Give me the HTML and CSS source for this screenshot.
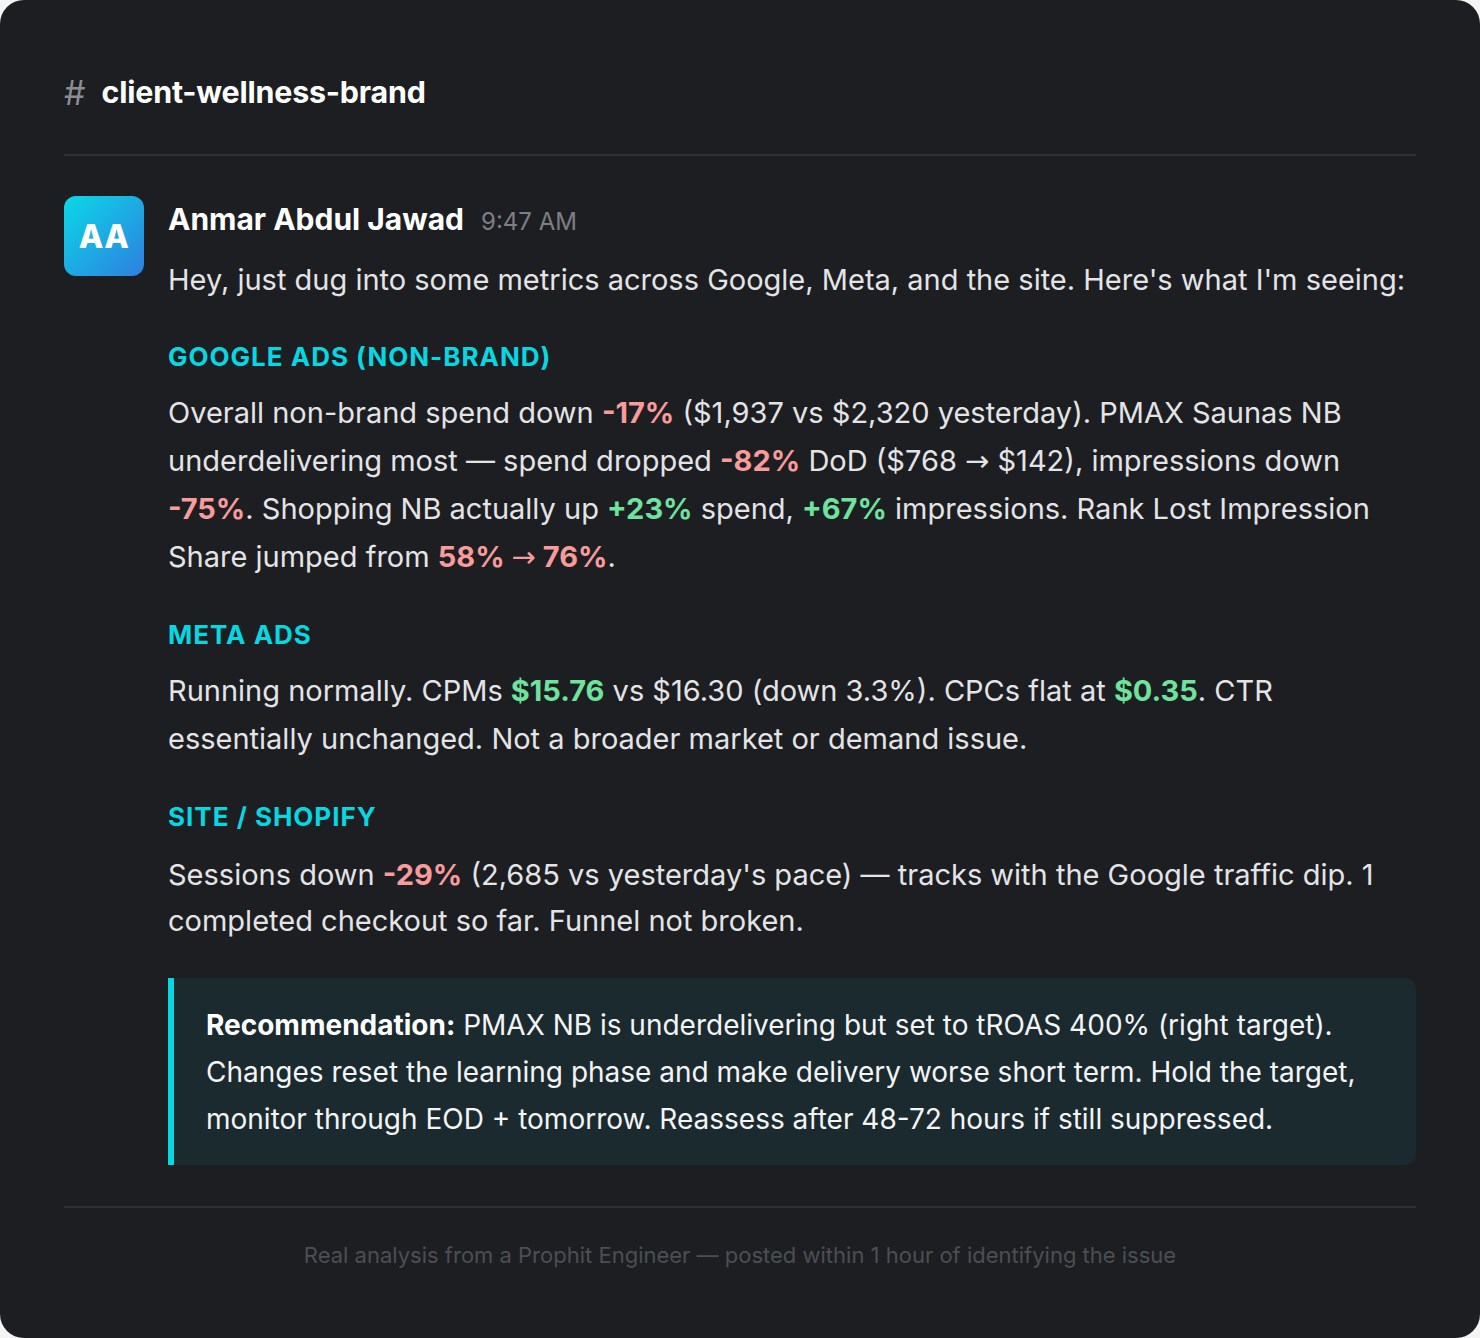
FILE: index.html
```html
<!DOCTYPE html>
<html lang="en">
<head>
<meta charset="utf-8">
<title>client-wellness-brand</title>
<link rel="stylesheet" href="styles.css">
</head>
<body>
<div class="card">
  <header class="channel">
    <span class="hash">#</span>
    <span class="channel-name">client-wellness-brand</span>
  </header>
  <div class="divider"></div>
  <div class="message">
    <div class="avatar">AA</div>
    <div class="content">
      <div class="meta-line">
        <span class="author">Anmar Abdul Jawad</span>
        <span class="time">9:47 AM</span>
      </div>
      <p class="intro">Hey, just dug into some metrics across Google, Meta, and the site. Here's what I'm seeing:</p>

      <h3 class="section-title">GOOGLE ADS (NON-BRAND)</h3>
      <p class="body body-google">Overall non-brand spend down <b class="neg">-17%</b> ($1,937 vs $2,320 yesterday). PMAX Saunas NB underdelivering most — spend dropped <b class="neg">-82%</b> DoD ($768 <span class="arrow">→</span> $142), impressions down <b class="neg">-75%</b>. Shopping NB actually up <b class="pos">+23%</b> spend, <b class="pos">+67%</b> impressions. Rank Lost Impression Share jumped from <b class="neg">58% <span class="arrow">→</span> 76%</b>.</p>

      <h3 class="section-title">META ADS</h3>
      <p class="body body-meta">Running normally. CPMs <b class="pos">$15.76</b> vs $16.30 (down 3.3%). CPCs flat at <b class="pos">$0.35</b>. CTR essentially unchanged. Not a broader market or demand issue.</p>

      <h3 class="section-title">SITE / SHOPIFY</h3>
      <p class="body body-site">Sessions down <b class="neg">-29%</b> (2,685 vs yesterday's pace) — tracks with the Google traffic dip. 1 completed checkout so far. Funnel not broken.</p>

      <blockquote class="recommendation"><b>Recommendation:</b> PMAX NB is underdelivering but set to tROAS 400% (right target). Changes reset the learning phase and make delivery worse short term. Hold the target, monitor through EOD + tomorrow. Reassess after 48-72 hours if still suppressed.</blockquote>
    </div>
  </div>
  <div class="divider footer-divider"></div>
  <footer class="footer">Real analysis from a Prophit Engineer — posted within 1 hour of identifying the issue</footer>
</div>
</body>
</html>
```

FILE: styles.css
```css
* { box-sizing: border-box; }
html, body {
  margin: 0;
  padding: 0;
  background: #f4f4f5;
}
body {
  font-family: Inter, "Noto Sans", "Liberation Sans", sans-serif;
  width: 1480px;
  height: 1338px;
}
.card {
  width: 1480px;
  height: 1338px;
  background: #1d1e21;
  border-radius: 24px;
  padding: 64px 64px 0 64px;
  color: #e4e4e7;
}
.channel {
  display: flex;
  align-items: center;
  gap: 16px;
  height: 56px;
}
.hash {
  font-size: 34px;
  color: #8b8d93;
  font-weight: 400;
}
.channel-name {
  font-size: 30.4px;
  font-weight: 700;
  color: #ffffff;
  letter-spacing: -0.2px;
}
.divider {
  height: 2px;
  background: #2e3034;
  margin-top: 34px;
}
.message {
  display: flex;
  gap: 24px;
  margin-top: 40px;
}
.avatar {
  flex: 0 0 80px;
  width: 80px;
  height: 80px;
  border-radius: 12px;
  background: linear-gradient(135deg, #0ad8e6 0%, #2f7fe0 100%);
  color: #fff;
  font-weight: 800;
  font-size: 32px;
  display: flex;
  align-items: center;
  justify-content: center;
  letter-spacing: 0.5px;
}
.content {
  flex: 1;
  min-width: 0;
}
.meta-line {
  display: flex;
  align-items: baseline;
  gap: 17px;
  height: 46px;
}
.author {
  font-size: 30px;
  line-height: 46px;
  font-weight: 700;
  color: #ffffff;
}
.time {
  font-size: 24px;
  line-height: 46px;
  color: #7d7f85;
}
.intro {
  margin: 14px 0 0 0;
  font-size: 29px;
  line-height: 48px;
  color: #e4e4e7;
}
.section-title {
  margin: 34px 0 0 0;
  font-size: 26px;
  font-weight: 700;
  letter-spacing: 1px;
  color: #07d7e1;
  line-height: 38px;
}
.body {
  margin: 13px 0 0 0;
  font-size: 29px;
  line-height: 48px;
  color: #e4e4e7;
}
.intro + .section-title { margin-top: 34px; }
.body + .section-title { margin-top: 35px; }
.body b { font-weight: 700; }
.body-site { line-height: 46px; margin-top: 16px; }
.arrow {
  font-family: "DejaVu Sans", sans-serif;
  font-weight: 400;
  font-size: 29px;
  line-height: 1;
}
.neg { color: #f79b9b; }
.pos { color: #6fe39d; }
.recommendation {
  margin: 34px 0 0 0;
  background: #1b2a2e;
  border-left: 6px solid #07d7e1;
  border-radius: 0 10px 10px 0;
  padding: 24px 32px 22px 32px;
  font-size: 28px;
  line-height: 47px;
  color: #f4f4f5;
}
.recommendation b { color: #ffffff; font-weight: 700; }
.footer-divider {
  margin-top: 41px;
}
.footer {
  margin-top: 34px;
  text-align: center;
  font-size: 22px;
  line-height: 27px;
  color: #4b4e54;
}
```
